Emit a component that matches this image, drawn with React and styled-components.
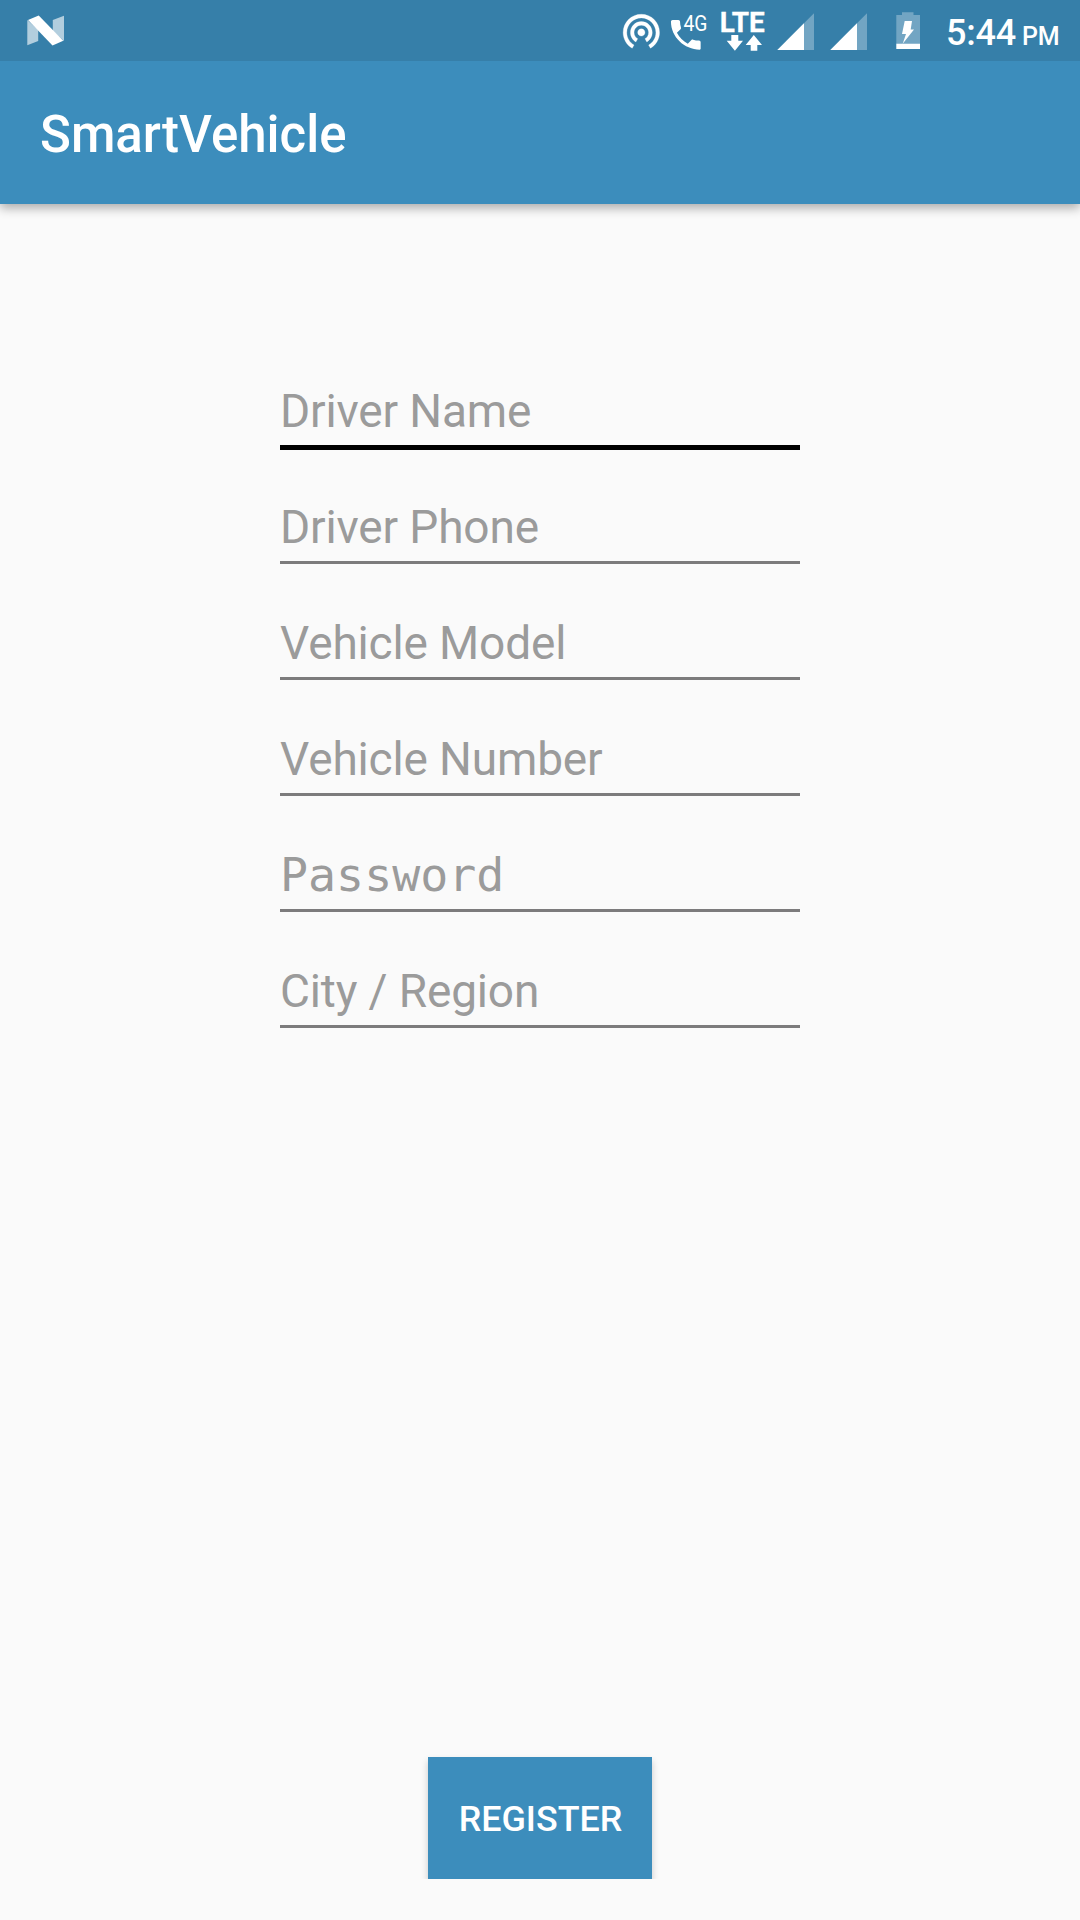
import React from "react";
import styled, { createGlobalStyle } from "styled-components";

const GlobalStyle = createGlobalStyle`
  * { box-sizing: border-box; }
  html, body { margin: 0; padding: 0; background: #fafafa; }
  body { font-family: Roboto, "Liberation Sans", sans-serif; }
`;

const Screen = styled.div`
  width: 1080px;
  height: 1920px;
  display: flex;
  flex-direction: column;
  background: #fafafa;
  overflow: hidden;
`;

const StatusBar = styled.header`
  position: relative;
  z-index: 1;
  height: 61px;
  display: flex;
  flex: none;
  background: #367fa9;
  color: #fff;
`;

const StatusIcon = styled.svg`
  display: block;
  flex: none;
  height: 61px;
  fill: #fff;
  font-family: Roboto, sans-serif;
`;

const Spacer = styled.div`
  flex: 1;
`;

const Clock = styled.div`
  width: 134px;
  font-size: 36px;
  font-weight: 500;
  line-height: 66px;
  letter-spacing: -0.2px;
  white-space: nowrap;
`;

const Meridiem = styled.span`
  margin-left: 6px;
  font-size: 25px;
`;

const AppBar = styled.div`
  height: 143px;
  flex: none;
  display: flex;
  align-items: center;
  padding: 4px 40px 0;
  background: #3c8dbc;
  box-shadow: 0 4px 10px rgba(0, 0, 0, 0.32);
`;

const Title = styled.h1`
  margin: 0;
  color: #fff;
  font-size: 51px;
  font-weight: 500;
  line-height: 60px;
`;

const Form = styled.form`
  flex: 1;
  display: flex;
  flex-direction: column;
  align-items: center;
  padding-top: 132px;
`;

const Field = styled.label`
  width: 520px;
  height: 116px;
  display: flex;
  flex-direction: column;
  justify-content: flex-end;
`;

const Hint = styled.span`
  color: #9b9b9b;
  font-family: ${(p) => (p.$mono ? '"DejaVu Sans Mono", monospace' : 'Roboto, sans-serif')};
  font-size: ${(p) => (p.$mono ? "46.6px" : "46px")};
  letter-spacing: ${(p) => (p.$mono ? "0" : "-0.15px")};
  line-height: 60px;
  white-space: nowrap;
`;

const Underline = styled.span`
  height: 7px;
  margin-top: 4px;
  border-top: ${(p) => (p.$focused ? "5px solid #000" : "3px solid #7c7b7c")};
`;

const Footer = styled.div`
  margin-top: auto;
  margin-bottom: 41px;
  padding: 12px 20px 0;
  overflow: hidden;
`;

const RegisterButton = styled.button`
  display: block;
  width: 224px;
  height: 122px;
  padding: 2px 0 0 1px;
  border: 0;
  background: #3c8dbc;
  color: #fff;
  font: 500 35.8px/44px Roboto, sans-serif;
  box-shadow: 0 4px 7px rgba(0, 0, 0, 0.2);
`;

const fields = [
  { label: "Driver Name", focused: true },
  { label: "Driver Phone" },
  { label: "Vehicle Model" },
  { label: "Vehicle Number" },
  { label: "Password", mono: true },
  { label: "City / Region" },
];

function NougatIcon() {
  return (
    <StatusIcon width="70" viewBox="0 0 70 61">
      <path fillOpacity=".62" d="M27.3 20 38.2 30V41L27.3 45.3ZM52.8 20 64 15.8V41L52.8 31Z" />
      <path d="M28 20 38.7 15.5 63.3 40.7 52.5 45.5Z" />
    </StatusIcon>
  );
}

function HotspotIcon() {
  return (
    <StatusIcon width="50" viewBox="616 0 50 61">
      <path
        transform="translate(619.5 8.8) scale(1.82)"
        stroke="#fff"
        strokeWidth=".15"
        d="M12 11c-1.1 0-2 .9-2 2s.9 2 2 2 2-.9 2-2-.9-2-2-2zm6 2c0-3.31-2.69-6-6-6s-6 2.69-6 6c0 2.22 1.21 4.15 3 5.19l1-1.74c-1.19-.7-2-1.97-2-3.45 0-2.21 1.79-4 4-4s4 1.79 4 4c0 1.48-.81 2.75-2 3.45l1 1.74c1.79-1.04 3-2.97 3-5.19zM12 3C6.48 3 2 7.48 2 13c0 3.7 2.01 6.92 4.99 8.65l1-1.73C5.61 18.53 4 15.96 4 13c0-4.42 3.58-8 8-8s8 3.58 8 8c0 2.96-1.61 5.53-4 6.92l1 1.73c2.99-1.73 5-4.95 5-8.65 0-5.52-4.48-10-10-10z"
      />
    </StatusIcon>
  );
}

function CallIcon() {
  return (
    <StatusIcon width="48" viewBox="666 0 48 61">
      <path
        transform="translate(666 15) scale(1.65)"
        d="M6.62 10.79c1.44 2.83 3.76 5.14 6.59 6.59l2.2-2.2c.27-.27.67-.36 1.02-.24 1.12.37 2.33.57 3.57.57.55 0 1 .45 1 1V20.5c0 .3-.2.5-.5.5-9.39 0-17.5-7.61-17.5-17 0-.55.45-1 1-1h3.5c.55 0 1 .45 1 1 0 1.25.2 2.45.57 3.57.11.35.03.74-.25 1.02l-2.2 2.2z"
      />
      <text x="683.5" y="31.2" fontSize="22.5" textLength="24" lengthAdjust="spacingAndGlyphs">4G</text>
    </StatusIcon>
  );
}

function LteIcon() {
  return (
    <StatusIcon width="56" viewBox="714 0 56 61">
      <text x="719.7" y="31.8" fontSize="27.5" fontWeight="700" stroke="#fff" strokeWidth=".3" textLength="45" lengthAdjust="spacingAndGlyphs">LTE</text>
      <path d="M731.3 35H738.3V40.7H743L734.9 50.7 726.7 40.7H731.3ZM753.8 35 762 45H757.3V50.7H750.7V45H745.7Z" />
    </StatusIcon>
  );
}

function SignalIcon() {
  return (
    <StatusIcon width="53" viewBox="770 0 53 61">
      <path fillOpacity=".3" d="M814 13.3V50H777.3Z" />
      <path d="M804 23.3V50H777.3Z" />
    </StatusIcon>
  );
}

function BatteryIcon() {
  return (
    <StatusIcon width="70" viewBox="876 0 70 61">
      <path fillOpacity=".3" d="M902 12.3H913.5V15H920V44H896.3V15H902Z" />
      <path d="M896.3 43.8H920V49H896.3ZM904.7 21H912L910.7 29.5H914L902.7 43.8 906 34H902Z" />
    </StatusIcon>
  );
}

export default function App() {
  return (
    <Screen>
      <GlobalStyle />
      <StatusBar>
        <NougatIcon />
        <Spacer />
        <HotspotIcon />
        <CallIcon />
        <LteIcon />
        <SignalIcon />
        <SignalIcon />
        <BatteryIcon />
        <Clock>
          5:44<Meridiem>PM</Meridiem>
        </Clock>
      </StatusBar>
      <AppBar>
        <Title>SmartVehicle</Title>
      </AppBar>
      <Form>
        {fields.map((f) => (
          <Field key={f.label}>
            <Hint $mono={f.mono}>{f.label}</Hint>
            <Underline $focused={f.focused} />
          </Field>
        ))}
        <Footer>
          <RegisterButton type="button">REGISTER</RegisterButton>
        </Footer>
      </Form>
    </Screen>
  );
}
